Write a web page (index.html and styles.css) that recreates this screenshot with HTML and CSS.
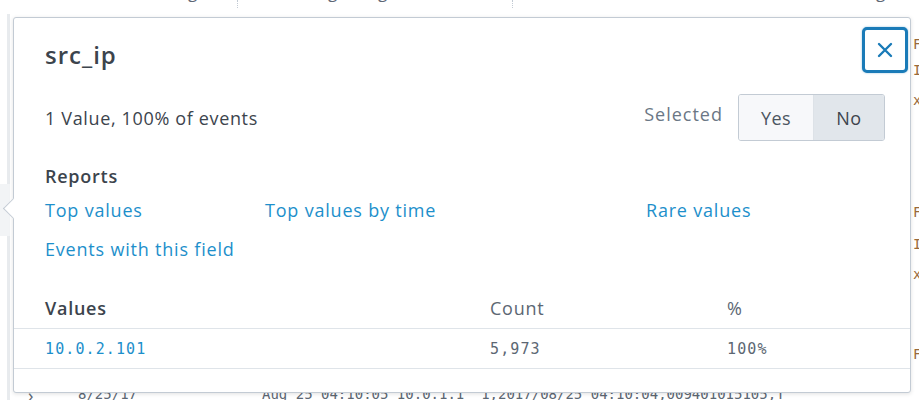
FILE: index.html
```html
<!DOCTYPE html>
<html>
<head>
<meta charset="utf-8">
<link rel="stylesheet" href="styles.css">
</head>
<body>
<div class="page">
  <div class="bg-top">
    <span class="bg-cell c1">g</span>
    <span class="bg-sep s1"></span>
    <span class="bg-cell c2">g</span>
    <span class="bg-cell c3">g</span>
    <span class="bg-cell c4">g</span>
    <span class="bg-sep s2"></span>
  </div>
  <div class="bg-rail"></div>
  <div class="bg-hl"></div>
  <div class="bg-right">
    <span class="r1">F</span>
    <span class="r2">I</span>
    <span class="r3">x</span>
    <span class="r4">F</span>
    <span class="r5">I</span>
    <span class="r6">x</span>
    <span class="r7">F</span>
  </div>
  <div class="bg-bottom"><span class="bg-chev">›</span><span class="bg-date">8/25/17</span><span class="bg-raw">Aug 25 04:10:05 10.0.1.1 &nbsp;1,2017/08/25 04:10:04,009401015105,T</span></div>

  <div class="popover">
    <div class="arrow"></div>
    <button class="close" aria-label="Close">
      <svg width="18" height="18" viewBox="0 0 18 18"><path d="M3 3 L15 15 M15 3 L3 15" stroke="#1a7bb8" stroke-width="2.4" stroke-linecap="round"/></svg>
    </button>
    <div class="inner">
      <h2 class="title">src_ip</h2>
      <div class="summary">
        <span class="count-text">1 Value, 100% of events</span>
        <div class="selected">
          <span class="sel-label">Selected</span>
          <div class="toggle">
            <button class="tbtn yes">Yes</button>
            <button class="tbtn no">No</button>
          </div>
        </div>
      </div>
      <div class="reports-title">Reports</div>
      <div class="links">
        <a class="link">Top values</a>
        <a class="link">Top values by time</a>
        <a class="link">Rare values</a>
        <a class="link">Events with this field</a>
      </div>
    </div>
    <div class="vtable">
      <div class="vrow head">
        <div class="vc first">Values</div>
        <div class="vc">Count</div>
        <div class="vc">%</div>
      </div>
      <div class="vrow body">
        <div class="vc first mono val">10.0.2.101</div>
        <div class="vc mono num">5,973</div>
        <div class="vc mono num">100%</div>
      </div>
    </div>
  </div>
</div>
</body>
</html>
```
FILE: styles.css
```css
* { box-sizing: border-box; }
html, body { margin: 0; padding: 0; }
body {
  width: 919px;
  height: 400px;
  overflow: hidden;
  background: #ffffff;
  font-family: "Open Sans", "Lato", sans-serif;
  color: #3c444d;
}
.page {
  position: relative;
  width: 919px;
  height: 400px;
}
.bg-top {
  position: absolute;
  left: 0; top: -20px;
  width: 919px; height: 31px;
  font-family: "Open Sans", sans-serif;
  font-size: 17px;
  color: #5c6773;
}
.bg-cell { position: absolute; top: 0; }
.c1 { left: 188px; }
.c2 { left: 328px; }
.c3 { left: 378px; }
.c4 { left: 876px; }
.bg-sep { position: absolute; top: 20px; height: 8px; border-left: 1px dotted #c3cbd4; }
.s1 { left: 237px; }
.s2 { left: 512px; }
.bg-rail {
  position: absolute;
  left: 7px; top: 14px; bottom: 0;
  width: 3px;
  background: #e8ebee;
}
.bg-hl {
  position: absolute;
  left: 0; top: 184px; width: 10px; height: 52px;
  background: #f2f4f6;
}
.bg-right {
  position: absolute;
  left: 913px; top: 0;
  width: 10px; height: 400px;
  font-family: "DejaVu Sans Mono", monospace;
  font-size: 14px;
  color: #9a6a3a;
}
.bg-right span { position: absolute; left: 0; }
.r1 { top: 36px; }
.r2 { top: 62px; }
.r3 { top: 92px; }
.r4 { top: 204px; }
.r5 { top: 236px; }
.r6 { top: 266px; }
.r7 { top: 346px; }
.bg-bottom {
  position: absolute;
  left: 0; top: 386px;
  width: 919px;
  font-family: "DejaVu Sans Mono", monospace;
  font-size: 14px;
  color: #5c6773;
  white-space: nowrap;
}
.bg-chev { position: absolute; left: 28px; font-family: "Open Sans", sans-serif; font-size: 18px; top: -3px; }
.bg-date { position: absolute; left: 78px; }
.bg-raw { position: absolute; left: 262px; }

.popover {
  position: absolute;
  left: 13px; top: 17px;
  width: 898px; height: 376px;
  background: #ffffff;
  border: 1px solid #c3cbd4;
  border-radius: 3px;
  box-shadow: 0 1px 4px rgba(0,0,0,0.12);
  font-size: 18px;
  letter-spacing: 0.75px;
}
.arrow {
  position: absolute;
  left: -8px; top: 183px;
  width: 15px; height: 15px;
  background: #ffffff;
  border-left: 1px solid #c3cbd4;
  border-bottom: 1px solid #c3cbd4;
  transform: rotate(45deg);
}
.close {
  position: absolute;
  right: 2px; top: 9px;
  width: 46px; height: 46px;
  border: 3px solid #1a7bb8;
  border-radius: 5px;
  background: #ffffff;
  padding: 0;
  display: flex;
  align-items: center;
  justify-content: center;
  box-shadow: 0 0 2px rgba(26,123,184,0.5);
}
.inner {
  padding: 22px 0 0 31px;
}
.title {
  margin: 0;
  font-size: 24px;
  font-weight: 600;
  line-height: 30px;
  letter-spacing: 1px;
  color: #3c444d;
}
.summary {
  margin-top: 24px;
  display: flex;
  align-items: center;
  justify-content: space-between;
  padding-right: 25px;
  height: 47px;
}
.count-text {
  color: #3c444d;
  letter-spacing: 0.65px;
}
.selected {
  display: flex;
  align-items: center;
}
.sel-label {
  color: #6b7785;
  margin-right: 15px;
  margin-top: -8px;
  letter-spacing: 1px;
}
.toggle {
  display: flex;
  border: 1px solid #c3cbd4;
  border-radius: 3px;
  overflow: hidden;
  height: 47px;
}
.tbtn {
  font-family: "Open Sans", sans-serif;
  font-size: 18px;
  letter-spacing: 0.5px;
  color: #3c444d;
  border: none;
  padding: 0;
  height: 100%;
}
.yes { width: 75px; background: #f7f8fa; border-right: 1px solid #dde2e7; color: #4c5560; }
.no { width: 70px; background: #e1e6eb; }
.reports-title {
  margin-top: 25px;
  font-weight: 600;
  line-height: 20px;
  color: #3c444d;
}
.links {
  margin-top: 14px;
  display: grid;
  grid-template-columns: 220px 381px auto;
  row-gap: 19px;
  line-height: 20px;
}
.link {
  color: #1d8fcb;
  text-decoration: none;
  letter-spacing: 0.8px;
}
.vtable {
  margin-top: 20px;
}
.vrow {
  display: grid;
  grid-template-columns: 476px 237px 1fr;
  border-bottom: 1px solid #dfe4e9;
}
.vrow.head { height: 50px; align-items: center; padding-top: 8px; }
.vrow.body { height: 40px; align-items: center; }
.vc.first { padding-left: 31px; }
.head .vc { color: #5c6773; }
.head .vc.first { color: #3c444d; font-weight: 600; }
.mono {
  font-family: "DejaVu Sans Mono", monospace;
  font-size: 15px;
  letter-spacing: 1.1px;
}
.val { color: #1d8fcb; }
.num { color: #5c6773; }
```
